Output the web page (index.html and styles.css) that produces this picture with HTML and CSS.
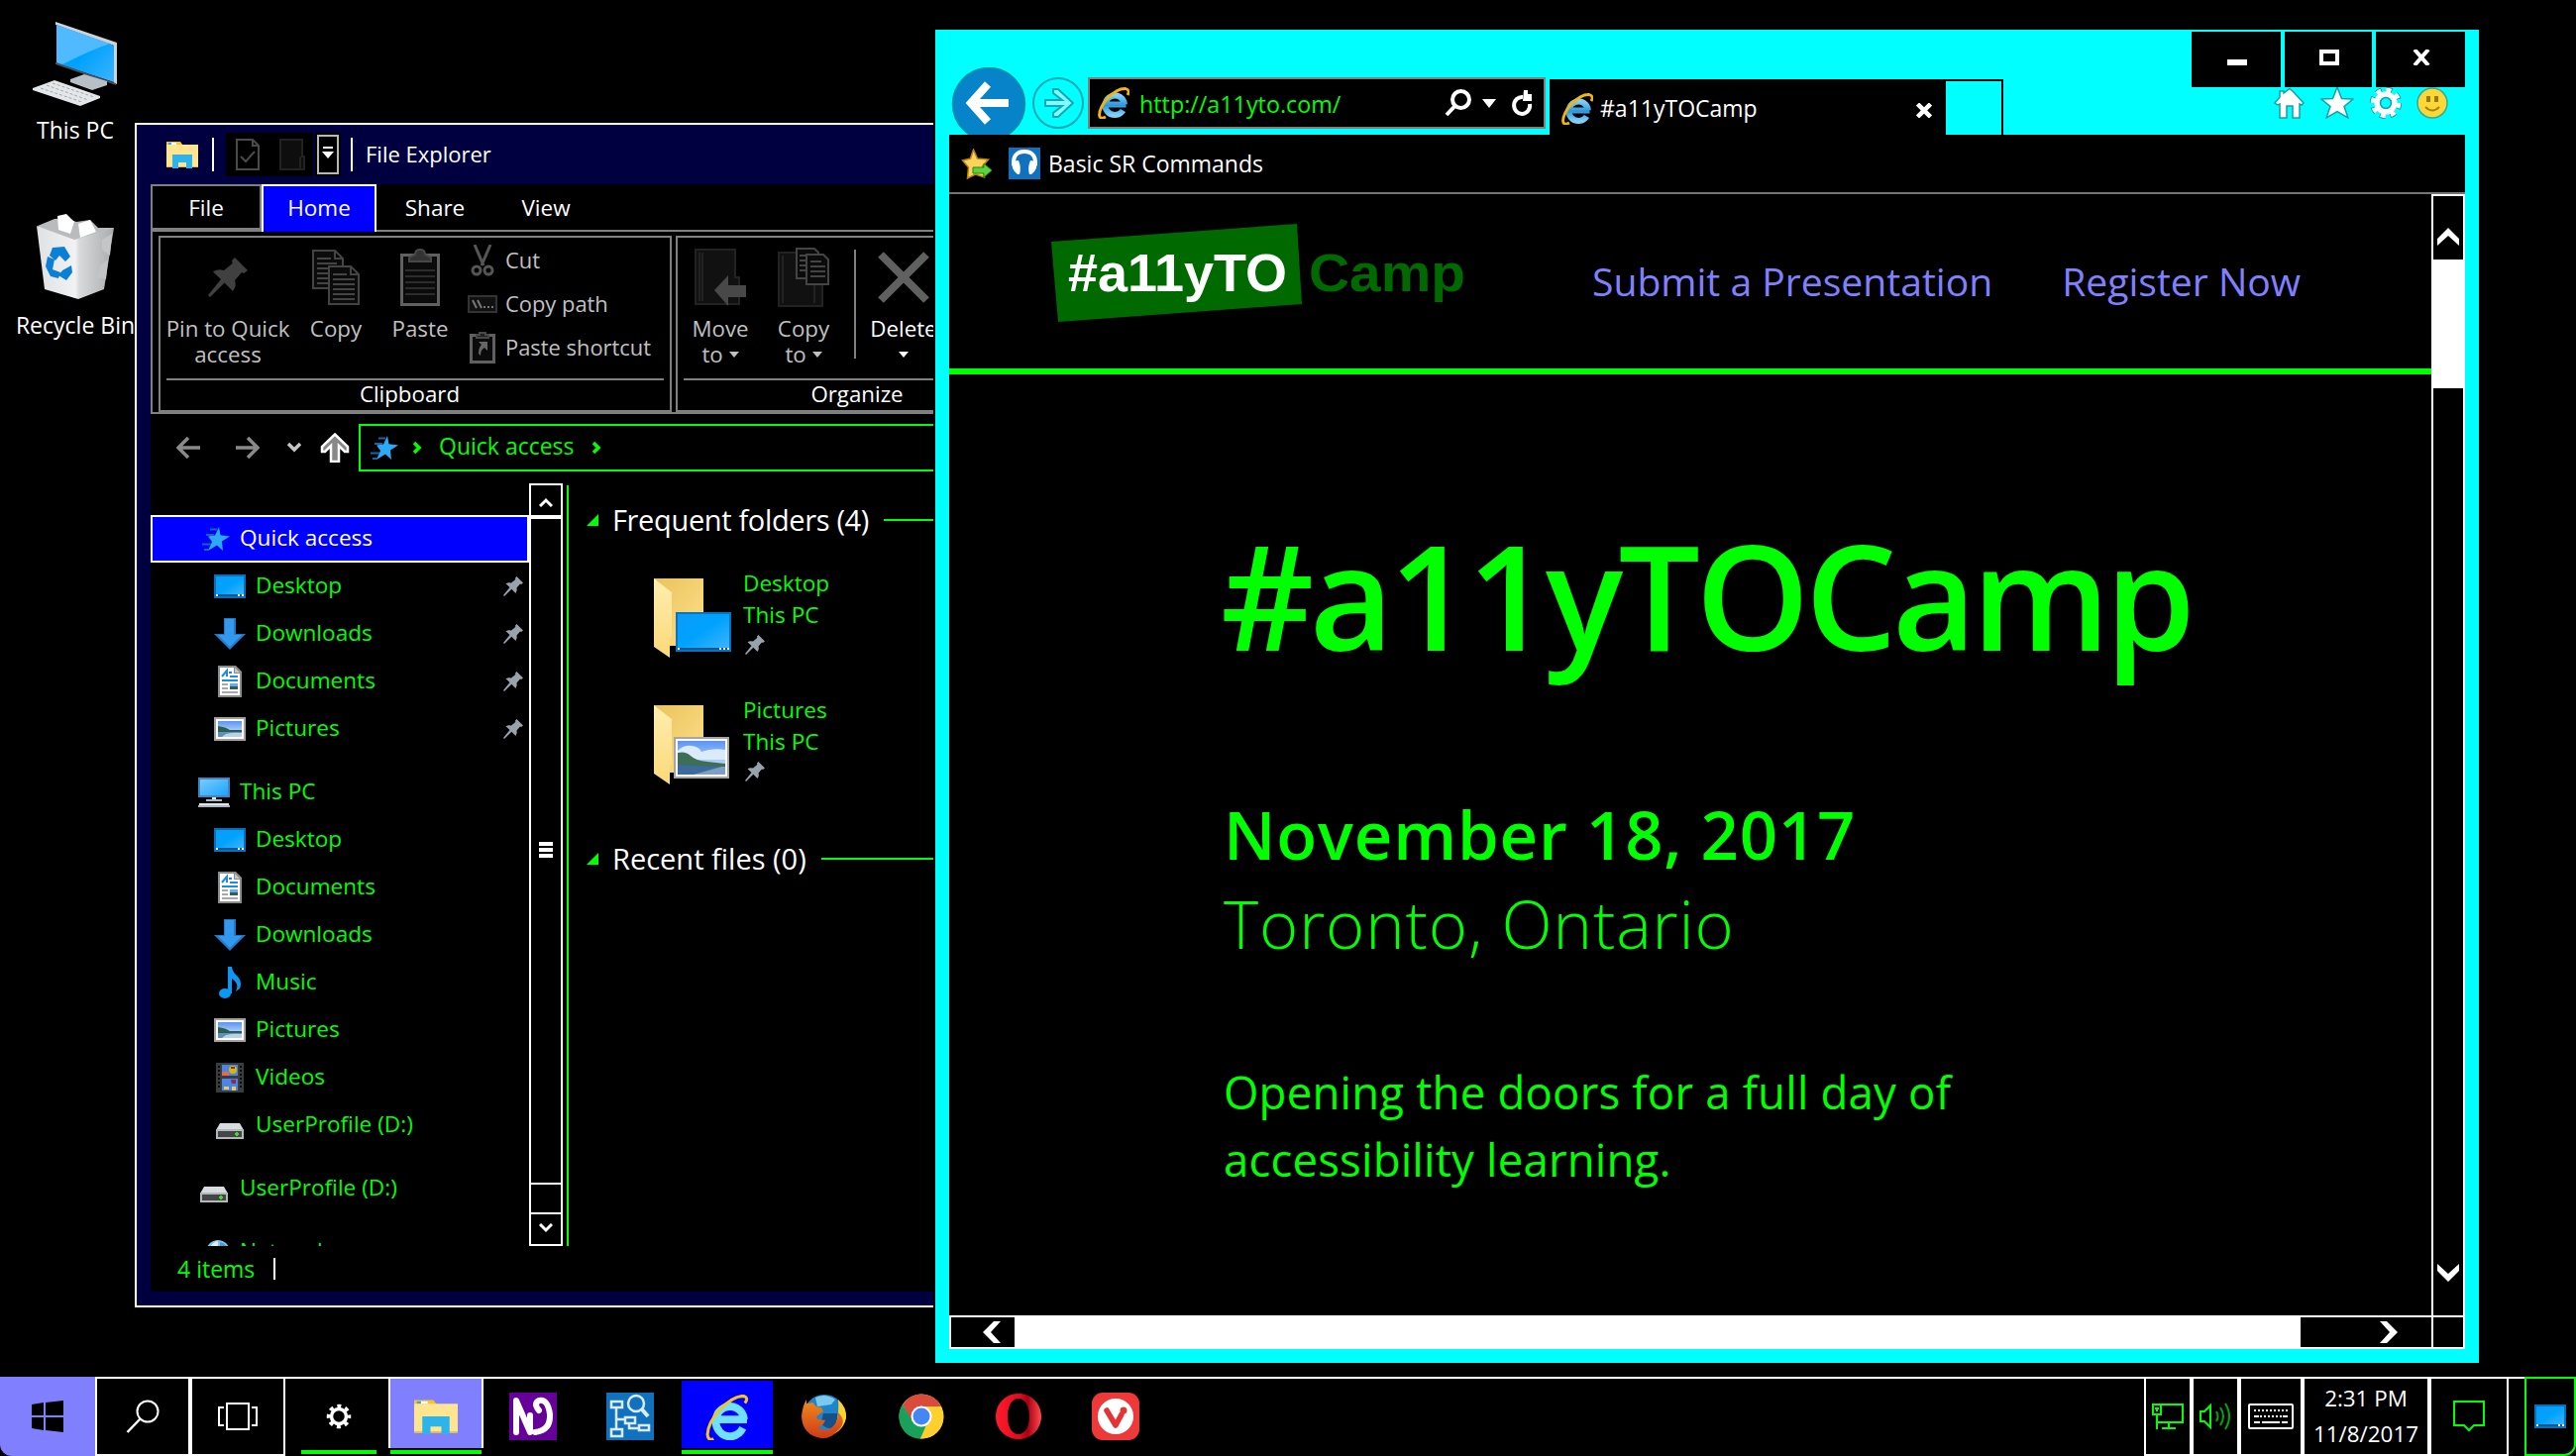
FILE: index.html
```html
<!DOCTYPE html>
<html lang="en">
<head>
<meta charset="utf-8">
<title>Desktop</title>
<link rel="stylesheet" href="styles.css">
</head>
<body>
<svg class="defs" width="0" height="0" aria-hidden="true">
  <defs>
    <linearGradient id="gSky" x1="0" y1="0" x2="0" y2="1"><stop offset="0" stop-color="#5a94f5"/><stop offset="1" stop-color="#e4f1fa"/></linearGradient>
    <linearGradient id="gBlue" x1="0" y1="0" x2="1" y2="1"><stop offset="0" stop-color="#0a9cf8"/><stop offset=".5" stop-color="#00a2ff"/><stop offset="1" stop-color="#3db3ff"/></linearGradient>
    <linearGradient id="gMon" x1="0" y1="0" x2="1" y2="1"><stop offset="0" stop-color="#7ccaff"/><stop offset="1" stop-color="#1aa5ff"/></linearGradient>
    <linearGradient id="gFold" x1="0" y1="0" x2="1" y2="1"><stop offset="0" stop-color="#e9c35c"/><stop offset="1" stop-color="#ffe08a"/></linearGradient>
    <linearGradient id="gFlap" x1="0" y1="0" x2="0" y2="1"><stop offset="0" stop-color="#ffeeb0"/><stop offset="1" stop-color="#fad978"/></linearGradient>
    <linearGradient id="gE" x1="0" y1="0" x2="0" y2="1"><stop offset="0" stop-color="#7ed0f8"/><stop offset=".5" stop-color="#2f96dc"/><stop offset="1" stop-color="#7ed0f8"/></linearGradient>
    <linearGradient id="gO" x1="0" y1="0" x2="1" y2="0"><stop offset="0" stop-color="#ff1b2d"/><stop offset=".55" stop-color="#e00a1c"/><stop offset=".7" stop-color="#a70014"/><stop offset="1" stop-color="#ff4b4b"/></linearGradient>
    <linearGradient id="gBin" x1="0" y1="0" x2="1" y2="0"><stop offset="0" stop-color="#dfe1e3"/><stop offset=".5" stop-color="#f2f2f3"/><stop offset=".55" stop-color="#d8dadb"/><stop offset="1" stop-color="#a9abad"/></linearGradient>
    <linearGradient id="gFox" x1="0" y1="0" x2="0" y2="1"><stop offset="0" stop-color="#f08a1d"/><stop offset="1" stop-color="#cf3a17"/></linearGradient>
  </defs>
  <symbol id="pin" viewBox="0 0 20 20"><path d="M13.5 0 20 6.5 18 8 17 7.5 13.5 11.5Q14.500 14.500 12.500 17L8.300 12.800 1 20 0 19 6.500 11 2.500 7.200Q5 5.500 8 6.500L12.300 3 12 1.500Z"/></symbol>
  <symbol id="star" viewBox="0 0 28 24"><path fill="#2da9f5" d="M17 0 18.500 8.200 28 9.500 20 14.500 21 24 15 18.500 6 24 10 15 6 9.500 13 8.500Z"/><path stroke="#1267a8" stroke-width="2" d="M8 2.500h7M4 8h8M0 17.500h9M2 23h5"/></symbol>
  <symbol id="screen" viewBox="0 0 32 24"><path fill="#0a6fb8" d="M0 0h32v24H0z"/><path fill="url(#gBlue)" d="M2 2h28v18H2z"/><path fill="#0a5a96" d="M2 20h28v2H2z"/><path fill="#fff" d="M2 20h2v2H2zM24 20h2v2h-2zM28 20h2v2h-2z"/></symbol>
  <symbol id="down" viewBox="0 0 32 32"><path fill="#1f78c8" d="M10 0h12v16h10L16 32 0 16h10z"/><path fill="#3399ee" d="M11 1h9v16h8L16 29 4 17h7z"/></symbol>
  <symbol id="doc" viewBox="0 0 24 32"><path fill="#8c8c8c" d="M0 0h18l6 6v26H0z"/><path fill="#fff" d="M2 2h14v6h6v22H2z"/><path fill="#c8c8c8" d="M17 2v5h5z"/><path stroke="#1a8ddc" stroke-width="2" fill="none" d="M4 11 9 5v6M11 7h3M12 11h8M4 15h16"/><path stroke="#a9a9a9" stroke-width="2" d="M4 19h6M4 23h6M4 27h16"/><path fill="#6fa8e8" d="M12 18h8v3h-8z"/><path fill="#2e5f55" d="M12 21h8v3h-8z"/></symbol>
  <symbol id="pic" viewBox="0 0 32 24"><path fill="#a0a0a0" d="M0 0h32v24H0z"/><path fill="#fff" d="M2 2h28v20H2z"/><path fill="url(#gSky)" d="M4 4h24v16H4z"/><path fill="#5d8fbf" d="M4 14h24v6H4z"/><path fill="#2f5f4a" d="M4 9q8 1 12 4h12v2H4z"/><path fill="#b9d2e6" d="M12 17q8-2 16-1v4H8z"/></symbol>
  <symbol id="pc" viewBox="0 0 32 30"><path fill="#3d88bf" d="M0 0h32v20H0z"/><path fill="url(#gMon)" d="M2 2h28v16H2z"/><path fill="#e5eaee" d="M14 20h4v2h-4z"/><path fill="#a9b8c6" d="M8 22h16v2H8zM0 28h32v2H0z"/><path fill="#e3e6e8" d="M1 26h30v2H1z"/></symbol>
  <symbol id="note" viewBox="0 0 22 32"><ellipse cx="6" cy="27" rx="6" ry="5" fill="#0b98f5"/><path fill="#0b98f5" d="M9 0h4q1 6 5 9 6 6 3 13l-4 3q4-8-4-13v15H9z"/></symbol>
  <symbol id="film" viewBox="0 0 28 30"><path fill="#3c3c3c" d="M0 0h28v30H0z"/><path fill="#4a86e8" d="M6 2h16v11H6zM6 16h16v12H6z"/><path fill="#0a0a0a" d="M2 3h2v2H2zM2 7h2v2H2zM2 11h2v2H2zM2 15h2v2H2zM2 19h2v2H2zM2 23h2v2H2zM24 3h2v2h-2zM24 7h2v2h-2zM24 11h2v2h-2zM24 15h2v2h-2zM24 19h2v2h-2zM24 23h2v2h-2z"/><circle cx="17" cy="7" r="4" fill="#d8b900"/><path fill="#e8674e" d="M6 9h7v4H6z"/><path fill="#8a2a5c" d="M15 4h4v2h-4zM15 17h5v4h-4z"/><path fill="#e2cf5a" d="M8 24h5v3H8zM16 24h4v4h-4z"/></symbol>
  <symbol id="drive" viewBox="0 0 28 16"><path fill="#d9dcdf" d="M4 0h20l4 7H0z"/><path fill="#b5b8bb" d="M0 6h28v10H0z"/><path fill="#454545" d="M2 8h24v6H2z"/><path fill="#2fe02f" d="M20 9h2v4h-2zM19 10h4v2h-4z"/></symbol>
  <symbol id="globe" viewBox="0 0 24 24"><circle cx="12" cy="12" r="12" fill="#7fc4e6"/><path fill="#d8f0fa" d="M4 8q2-6 8-7v5Q8 6 4 8z"/><path fill="#4a9fcf" d="M14 2q6 1 8 7h-8z"/></symbol>
  <symbol id="folder" viewBox="0 0 32 30"><path fill="#f7c32f" d="M0 2h14l3 4H0z"/><path fill="#fff" d="M5 3h5v2H5z"/><path fill="#2da9f5" d="M2 3h3v2H2z"/><path fill="#ffe58f" d="M0 5h32v23H0z"/><path fill="#e9b93c" d="M0 27h32v1H0z"/><path fill="#2db4ea" d="M6 29V15h20v14h-6v-6h-8v6z"/></symbol>
  <symbol id="bigfolder" viewBox="0 0 80 84"><path fill="url(#gFold)" d="M0 0h50v68H0z"/><path fill="url(#gFlap)" d="M0 0 18 14v46h-2v20L0 69z"/></symbol>
  <symbol id="bigpic" viewBox="0 0 56 42"><path fill="#a4a6a8" d="M0 0h56v42H0z"/><path fill="#fff" d="M2 2h52v38H2z"/><path fill="url(#gSky)" d="M4 4h48v34H4z"/><path fill="#dcebf9" d="M4 14q6-6 14-5t10 6q10-4 24-2v10H4z"/><path fill="#3c6a9e" d="M4 27h48v11H4z"/><path fill="#7f9fc2" d="M20 38l32-9v9z"/><path fill="#3d6e58" d="M4 16q8-2 13 3t17 6l18 2v3q-26 0-48-2z"/></symbol>
  <symbol id="ie" viewBox="0 0 32 32"><path fill="none" stroke="url(#gE)" stroke-width="6" d="M9 17.500H28.500M27 17.500A9.800 9.800 0 1 0 25.500 23.500"/><path fill="none" stroke="#f2b411" stroke-width="2.800" d="M8 30Q2 33 1.500 28 2 20 10 11 20 1 28 1.500 33 3 30 8"/></symbol>
</svg>

<div class="screen">
  <main class="desktop">
    <div class="shortcuts">
      <div class="shortcut">
        <svg class="shortcut-icon" viewBox="0 0 86 86"><path fill="#cfd3d6" d="M23 0 85 21v42l-3-1V24L23 3z"/><path fill="url(#gBlue)" d="M24 3 82 24v37L24 42z"/><path fill="#4fbaff" d="M24 3 78 22Q60 28 30 43l-6-2z"/><path fill="#4a4e52" d="M23 41 84 62v2L23 43z"/><path fill="#b8bfc5" d="M38 58 52 53 75 60v4L60 69 38 61z"/><path fill="#e4e7ea" d="M0 67 22 59 68 75v2L48 85 0 69z"/><path stroke="#a3a8ad" stroke-dasharray="3 2" d="M8 67 50 81M14 64 56 79M20 62l42 14"/></svg>
        <span>This PC</span>
      </div>
      <div class="shortcut bin">
        <svg class="shortcut-icon" viewBox="0 0 86 86"><path fill="#b9bbbd" d="M5 12 22 5 34 4l10 4 14-2 8 8 16 0-12 12-34 4-24-10z"/><path fill="#fff" d="M25 2 34 0 42 8 38 20 26 16zM46 10l12-4 6 12-16 6z"/><path fill="url(#gBin)" d="M4 12 42 26 82 14 72 76 46 86 12 76z"/><path fill="#c3c5c7" d="M70 26 80 20 78 42l-8-6zM68 52l8-6-2 20-8-2z"/><path fill="#0b7fd6" d="M20 34l12-1 6 10-5 5-6-6-4 5-6-5zM15 43l7 3-2 10 8 3-2 6-8-2-5-10zM30 57l9-5 1 7-6 8-8-5z"/></svg>
        <span>Recycle Bin</span>
      </div>
    </div>

    <section class="explorer">
      <header class="ex-title">
        <svg class="ex-folder" viewBox="0 0 32 30"><use href="#folder"/></svg>
        <i class="ex-sep"></i>
        <span class="qat">
          <svg width="24" height="32" viewBox="0 0 24 32" fill="none" stroke="#4a4a4a" stroke-width="2"><path d="M1 1h16l6 6v24H1zM17 1v6h6M5 18l5 5 9-10"/></svg>
          <svg width="26" height="32" viewBox="0 0 26 32" fill="#0e0e0e" stroke="#222" stroke-width="2"><path d="M1 1h22v17h2v13H1zM21 18v13"/></svg>
        </span>
        <span class="qat-more"><svg width="22" height="40" viewBox="0 0 22 40"><path fill="none" stroke="#b8b8b8" stroke-width="2" d="M1 1h20v38H1z"/><path fill="#fff" d="M6 12h10v2H6zM5 17h12l-6 7z"/></svg></span>
        <i class="ex-sep last"></i>
        <span class="ex-name">File Explorer</span>
      </header>
      <div class="ex-body">
        <nav class="ex-tabs">
          <span class="tab-file">File</span><span class="tab-home">Home</span>
          <span class="tab-rest"><span class="tab-share">Share</span><span class="tab-view">View</span></span>
        </nav>
        <div class="ribbon">
          <div class="group clip">
            <div class="group-body">
              <div class="tool t-pin"><span class="tool-icon"><svg width="40" height="40" viewBox="0 0 20 20" fill="#404040"><use href="#pin"/></svg></span><span>Pin to Quick<br>access</span></div>
              <div class="tool t-copy"><span class="tool-icon"><svg width="48" height="56" viewBox="0 0 48 56" fill="#0b0b0b" stroke="#444" stroke-width="2"><path d="M1 1h22l8 8v30H1zM23 1v8h8M5 9h14M5 14h20M5 19h20M5 24h20M5 29h20M5 34h20"/><path d="M17 17h22l8 8v30H17zM39 17v8h8M21 25h14M21 30h22M21 35h22M21 40h22M21 45h22M21 50h22"/></svg></span><span>Copy</span></div>
              <div class="tool t-paste"><span class="tool-icon"><svg width="40" height="58" viewBox="0 0 40 58" fill="#0b0b0b" stroke="#606060"><path stroke-width="3" d="M1.500 6.500h37v50h-37z"/><path stroke="#2c2c2c" stroke-width="2" d="M5 22h30M5 28h30M5 34h30M5 40h30M5 46h30"/><path fill="#333" stroke="#484848" stroke-width="2" d="M9 13V9l6-3q0-5 5-5t5 5l6 3v4z"/></svg></span><span>Paste</span></div>
              <div class="small-tools">
                <div><span class="st-icon"><svg width="24" height="32" viewBox="0 0 24 32" fill="none" stroke="#555" stroke-width="3"><path d="M4 0 13 21M20 0 11 21"/><circle cx="6" cy="26" r="4"/><circle cx="18" cy="26" r="4"/></svg></span>Cut</div>
                <div><span class="st-icon"><svg width="30" height="18" viewBox="0 0 30 18"><path fill="#111" stroke="#333" stroke-width="2" d="M1 1h28v16H1z"/><path stroke="#777" stroke-width="2" d="M5 5l4 8M10 5l4 8M16 12h2M20 12h2M24 12h2"/></svg></span>Copy path</div>
                <div><span class="st-icon"><svg width="26" height="32" viewBox="0 0 26 32"><path fill="#0b0b0b" stroke="#606060" stroke-width="3" d="M1.500 3.500h23v27h-23z"/><path fill="#222" stroke="#484848" stroke-width="2" d="M7 6V3h3V1h6v2h3v3z"/><path fill="#666" d="M9 10h9v9l-3-3q-4 2-4 8l-2-2q0-6 3-9z"/></svg></span>Paste shortcut</div>
              </div>
            </div>
            <div class="group-name">Clipboard</div>
          </div>
          <div class="group org">
            <div class="group-body">
              <div class="tool t-move"><span class="tool-icon"><svg width="52" height="58" viewBox="0 0 52 58"><path fill="#111" stroke="#222" stroke-width="2" d="M1 1h40v28h4v27H1zM5 4v49M8 4v49"/><path fill="#484848" d="M20 42 34 27v10h18v12H34v9z"/></svg></span><span>Move<br>to <i class="caret"></i></span></div>
              <div class="tool t-copyto"><span class="tool-icon"><svg width="52" height="60" viewBox="0 0 52 60"><path fill="#111" stroke="#222" stroke-width="2" d="M1 5h40v28h4v26H1zM5 8v48M37 38v18"/><path fill="#0b0b0b" stroke="#444" stroke-width="2" d="M19 1h18l4 4v26H19zM22 8h9M22 13h9M22 18h9M22 23h9"/><path fill="#0b0b0b" stroke="#444" stroke-width="2" d="M29 7h17l5 5v25H29zM33 14h11M33 19h15M33 24h15M33 29h15"/></svg></span><span>Copy<br>to <i class="caret"></i></span></div>
              <i class="tool-sep"></i>
              <div class="tool t-del"><span class="tool-icon"><svg width="52" height="52" viewBox="0 0 52 52" stroke="#606060" stroke-width="8"><path d="M3 3 49 49M49 3 3 49"/></svg></span><span>Delete<br><i class="caret"></i></span></div>
            </div>
            <div class="group-name">Organize</div>
          </div>
        </div>

        <div class="address-row">
          <svg class="nav-a" width="24" height="22" viewBox="0 0 24 22" fill="none" stroke="#8a8a8a" stroke-width="3.500"><path d="M24 11H3M12 1 2 11l10 10"/></svg>
          <svg class="nav-b" width="24" height="22" viewBox="0 0 24 22" fill="none" stroke="#8a8a8a" stroke-width="3.500"><path d="M0 11h21M12 1l10 10-10 10"/></svg>
          <svg class="nav-c" width="14" height="10" viewBox="0 0 14 10" fill="none" stroke="#c4c4c4" stroke-width="3.500"><path d="M1 1l6 6 6-6"/></svg>
          <svg class="nav-d" width="30" height="30" viewBox="0 0 30 30"><path fill="#888" stroke="#fff" stroke-width="2.500" d="M15 1.500 28 14v5h-3l-6-6v16h-8V13l-6 6H2v-5z"/></svg>
          <div class="address">
            <svg width="28" height="24" viewBox="0 0 28 24"><use href="#star"/></svg>
            <svg class="crumb1" width="10" height="12" viewBox="0 0 10 12" fill="none" stroke="#0f0" stroke-width="3.500"><path d="M2 1l5 5-5 5"/></svg>
            <span>Quick access</span>
            <svg width="10" height="12" viewBox="0 0 10 12" fill="none" stroke="#0f0" stroke-width="3.500"><path d="M2 1l5 5-5 5"/></svg>
          </div>
        </div>

        <div class="panes">
          <ul class="tree">
            <li class="root selected"><svg viewBox="0 0 28 24" width="28" height="24"><use href="#star"/></svg>Quick access</li>
            <li><svg viewBox="0 0 32 24" width="32" height="24"><use href="#screen"/></svg>Desktop<svg class="pinned" viewBox="0 0 20 20"><use href="#pin"/></svg></li>
            <li><svg viewBox="0 0 32 32" width="32" height="32"><use href="#down"/></svg>Downloads<svg class="pinned" viewBox="0 0 20 20"><use href="#pin"/></svg></li>
            <li><svg viewBox="0 0 24 32" width="32" height="32"><use href="#doc"/></svg>Documents<svg class="pinned" viewBox="0 0 20 20"><use href="#pin"/></svg></li>
            <li><svg viewBox="0 0 32 24" width="32" height="24"><use href="#pic"/></svg>Pictures<svg class="pinned" viewBox="0 0 20 20"><use href="#pin"/></svg></li>
            <li class="root gap"><svg viewBox="0 0 32 30" width="32" height="30"><use href="#pc"/></svg>This PC</li>
            <li><svg viewBox="0 0 32 24" width="32" height="24"><use href="#screen"/></svg>Desktop</li>
            <li><svg viewBox="0 0 24 32" width="32" height="32"><use href="#doc"/></svg>Documents</li>
            <li><svg viewBox="0 0 32 32" width="32" height="32"><use href="#down"/></svg>Downloads</li>
            <li><svg viewBox="0 0 22 32" width="32" height="32"><use href="#note"/></svg>Music</li>
            <li><svg viewBox="0 0 32 24" width="32" height="24"><use href="#pic"/></svg>Pictures</li>
            <li><svg viewBox="0 0 28 30" width="32" height="30"><use href="#film"/></svg>Videos</li>
            <li><svg class="low" viewBox="0 0 28 16" width="32" height="16"><use href="#drive"/></svg>UserProfile (D:)</li>
            <li class="root gap"><svg class="low" viewBox="0 0 28 16" width="32" height="16"><use href="#drive"/></svg>UserProfile (D:)</li>
            <li class="root gap"><svg class="network" viewBox="0 0 24 24" width="32" height="24"><use href="#globe"/></svg>Network</li>
          </ul>
          <div class="ex-scroll">
            <span class="sb-btn"><svg width="14" height="10" viewBox="0 0 14 10" fill="none" stroke="#fff" stroke-width="3"><path d="M1 9l6-6 6 6"/></svg></span>
            <span class="sb-thumb"><i></i><i></i><i></i></span>
            <span class="sb-track"></span>
            <span class="sb-btn bottom"><svg width="14" height="10" viewBox="0 0 14 10" fill="none" stroke="#fff" stroke-width="3"><path d="M1 1l6 6 6-6"/></svg></span>
          </div>
          <div class="files">
            <h2><svg width="12" height="12" viewBox="0 0 12 12"><path fill="#0f0" d="M12 0v12H0z"/></svg><span class="h-a">Frequent folders (4)</span></h2>
            <div class="frequent">
              <div class="entry">
                <div class="thumb"><svg width="80" height="84"><use href="#bigfolder"/></svg><svg class="over desk" width="56" height="40" viewBox="0 0 56 40"><path fill="#0a73bf" d="M0 0h56v40H0z"/><path fill="url(#gBlue)" d="M2 2h52v34H2z"/><path fill="#0a5a96" d="M2 36h52v2H2z"/><path fill="#fff" d="M2 36h2v2H2zM44 36h2v2h-2zM48 36h2v2h-2zM52 36h2v2h-2z"/></svg></div>
                <div class="entry-text">Desktop<br>This PC<svg class="pinned" viewBox="0 0 20 20"><use href="#pin"/></svg></div>
              </div>
              <div class="entry">
                <div class="thumb"><svg width="80" height="84"><use href="#bigfolder"/></svg><svg class="over" width="56" height="42"><use href="#bigpic"/></svg></div>
                <div class="entry-text">Pictures<br>This PC<svg class="pinned" viewBox="0 0 20 20"><use href="#pin"/></svg></div>
              </div>
            </div>
            <h2><svg width="12" height="12" viewBox="0 0 12 12"><path fill="#0f0" d="M12 0v12H0z"/></svg><span class="h-b">Recent files (0)</span></h2>
          </div>
        </div>
        <footer class="ex-status">4 items<i></i></footer>
      </div>
    </section>

    <section class="browser">
      <header class="br-top">
        <svg class="back" width="76" height="68" viewBox="0 0 76 68"><circle cx="38" cy="37" r="36.500" fill="#0683c9" stroke="#0f93a5" stroke-width="1.500"/><path fill="none" stroke="#fff" stroke-width="8" d="M58 36H22M37 17 20 36l17 19"/></svg>
        <svg class="fwd" width="52" height="52" viewBox="0 0 52 52"><circle cx="26" cy="26" r="25" fill="none" stroke="#10a9b4" stroke-width="2"/><path fill="#7ffbff" stroke="#12a7b5" stroke-width="2" d="M13 23h17l-9-7v-4h5l15 14-15 14h-5v-4l9-7H13z"/></svg>
        <div class="url">
          <svg width="32" height="32"><use href="#ie"/></svg>
          <span>http://a11yto.com/</span>
          <svg class="find" width="28" height="28" viewBox="0 0 28 28" fill="none" stroke="#fff" stroke-width="4"><circle cx="16.500" cy="10.500" r="8.500"/><path d="M10.500 17 2 26"/></svg>
          <svg class="drop" width="14" height="9" viewBox="0 0 14 9"><path fill="#fff" d="M0 0h14L7 9z"/></svg>
          <svg class="reload" width="22" height="28" viewBox="0 0 22 28"><path fill="none" stroke="#fff" stroke-width="4" d="M12 8A8 8.500 0 1 0 19 15"/><path fill="#fff" d="M13 1h4v4h4v7h-9z"/></svg>
        </div>
        <div class="br-tab"><svg width="32" height="32"><use href="#ie"/></svg><span>#a11yTOCamp</span><svg class="x" width="16" height="15" viewBox="0 0 16 15" stroke="#fff" stroke-width="4.500"><path d="M1.500 1l13 13M14.500 1l-13 13"/></svg></div>
        <div class="br-newtab"></div>
        <div class="br-right">
          <div class="win-buttons">
            <span><svg width="20" height="16" viewBox="0 0 20 16"><path fill="#fff" d="M0 10h20v6H0z"/></svg></span>
            <span><svg width="20" height="16" viewBox="0 0 20 16"><path fill="none" stroke="#fff" stroke-width="4" d="M2 2h16v12H2z"/></svg></span>
            <span><svg width="18" height="16" viewBox="0 0 18 16" stroke="#fff" stroke-width="4"><path d="M2 0l14 16M16 0 2 16"/></svg></span>
          </div>
          <div class="br-tools">
            <svg width="34" height="32" viewBox="0 0 34 32"><path fill="#fff" stroke="#15a0a5" stroke-width="1.500" d="M17 1.500 21 5l10 11-2 2-2-1v14h-7V19h-6v12H7V17l-2 1-3-2 5-6V4h4v2z"/></svg>
            <svg width="34" height="32" viewBox="0 0 34 32"><path fill="#fff" stroke="#15a0a5" stroke-width="1.500" d="M17 0l4.500 11.500L33 12l-9 7.500L28 31l-11-6.500L6 31l4-11.500L1 12l11.500-.5z"/></svg>
            <svg width="34" height="32" viewBox="0 0 34 32"><circle cx="18" cy="16" r="13.500" fill="none" stroke="#15a0a5" stroke-width="5.500" stroke-dasharray="6 4.600"/><circle cx="18" cy="16" r="13" fill="none" stroke="#fff" stroke-width="4.500" stroke-dasharray="5 5.210"/><circle cx="18" cy="16" r="8.500" fill="none" stroke="#fff" stroke-width="6"/><circle cx="18" cy="16" r="5.500" fill="none" stroke="#15a0a5" stroke-width="1.500"/></svg>
            <svg width="34" height="32" viewBox="0 0 34 32"><circle cx="17" cy="16" r="15" fill="#fdd835" stroke="#38a89a" stroke-width="1.500"/><path fill="#94781c" d="M11 9h4v6h-4zM19 9h4v6h-4z"/><path fill="none" stroke="#a5861e" stroke-width="2" d="M10 20q7 7 14 0"/></svg>
          </div>
        </div>
      </header>
      <div class="favorites">
        <svg width="32" height="32" viewBox="0 0 32 32"><path fill="#fbd25a" stroke="#b9800f" stroke-width="1.500" d="M12.500 1l4 9 11 1-6 7 2 11-9-3-8 4 1-11-6-7 8-2z"/><path fill="#5fd23b" stroke="#1f8a12" d="M12 19h11v-4l8 7-8 7v-4H12z"/></svg>
        <svg class="headset" width="32" height="32" viewBox="0 0 32 32"><path fill="#1072bf" d="M0 0h32v32H0z"/><path fill="none" stroke="#fff" stroke-width="4" d="M5 18Q4 4 16 4t11 14"/><path fill="#fff" d="M4 14l6-1q3 7 1 14H9Q2 22 4 14zM28 14l-6-1q-3 7-1 14h2q7-5 5-13z"/></svg>
        <span>Basic SR Commands</span>
      </div>
      <div class="viewport">
        <article class="page">
          <header class="site-head">
            <svg class="logo" width="430" height="104" viewBox="0 0 430 104"><path fill="#006a00" d="M1 19 249 1 254 82 8 100z"/><text x="18" y="69" fill="#fff" textLength="221" lengthAdjust="spacingAndGlyphs">#a11yTO</text><text x="261" y="69" fill="#006a00" textLength="158" lengthAdjust="spacingAndGlyphs">Camp</text></svg>
            <a class="l1">Submit a Presentation</a><a>Register Now</a>
          </header>
          <div class="hero">
            <h1>#a11yTOCamp</h1>
            <p class="when"><b>November 18, 2017</b><br>Toronto, Ontario</p>
            <p class="lead">Opening the doors for a full day of<br>accessibility learning.</p>
          </div>
        </article>
        <div class="vbar">
          <svg width="22" height="18" viewBox="0 0 22 18" fill="#fff"><path d="M0 18V11L11 0l11 11v7L11 8z"/></svg>
          <i></i>
          <svg class="dn" width="22" height="18" viewBox="0 0 22 18" fill="#fff"><path d="M0 0v7l11 11L22 7V0L11 10z"/></svg>
        </div>
        <div class="hbar">
          <svg width="18" height="22" viewBox="0 0 18 22" fill="#fff"><path d="M18 0h-7L0 11l11 11h7L8 11z"/></svg>
          <i></i>
          <svg class="rt" width="18" height="22" viewBox="0 0 18 22" fill="#fff"><path d="M0 0h7l11 11L7 22H0l10-11z"/></svg>
        </div>
        <div class="corner"></div>
      </div>
    </section>
  </main>

  <footer class="taskbar">
    <span class="start"><svg width="32" height="32" viewBox="0 0 32 32"><path d="M0 4 12 2v13H0zM14 2 32 0v15H14zM0 17h12v13L0 28zM14 17h18v15L14 30z"/></svg></span>
    <span class="tb-box"><svg width="34" height="34" viewBox="0 0 34 34" fill="none" stroke="#fff" stroke-width="2"><circle cx="22" cy="12" r="10.500"/><path stroke-width="2.500" d="M14.500 19.500 1.500 33"/></svg></span>
    <span class="tb-box"><svg width="40" height="28" viewBox="0 0 40 28" fill="none" stroke="#fff" stroke-width="2"><path d="M9 1h22v26H9zM6 5H1v18h5M34 5h5v18h-5"/></svg></span>
    <span class="tb-app gear"><svg width="26" height="26" viewBox="0 0 26 26" fill="none" stroke="#fff"><circle cx="13" cy="13" r="7.500" stroke-width="3.500"/><circle cx="13" cy="13" r="10.500" stroke-width="3.500" stroke-dasharray="4 4.250" stroke-dashoffset="2"/></svg></span>
    <span class="tb-app exp"><svg width="44" height="38" viewBox="0 0 32 30" preserveAspectRatio="none"><use href="#folder"/></svg></span>
    <span class="tb-app nvda"><svg width="48" height="48" viewBox="0 0 48 48"><path fill="#650099" d="M0 0h48v48H0z"/><path fill="none" stroke="#fff" stroke-width="6" stroke-linecap="round" stroke-linejoin="round" d="M7 40V8L21 40V23M26 40Q42 38 41 22 39 6 30 8 24 11 30 18"/></svg></span>
    <span class="tb-app"><svg width="48" height="48" viewBox="0 0 48 48"><path fill="#1072bf" d="M0 0h48v48H0z"/><g fill="none" stroke="#dceaf6" stroke-width="2.500"><circle cx="30" cy="11" r="8"/><path stroke-width="4" d="M36 17l6 7"/><path d="M5 9h11v6H5zM5 37h11v7H5zM19 25h10v6H19zM33 33h10v5H33zM10 15v22M10 27h9M23 31v5h10"/></g></svg></span>
    <span class="tb-app ie"><svg width="44" height="46" viewBox="0 0 32 32" preserveAspectRatio="none"><path fill="none" stroke="#6fe0ff" stroke-width="5.500" d="M9 17.500H30.500M28.500 17.500A10.500 10.500 0 1 0 27.500 23.500"/><path fill="none" stroke="#f6c41c" stroke-width="2.200" d="M6 31Q2 33 1.500 28 2 20 10 11 20 1 28 1 32 2 29 6"/></svg></span>
    <span class="tb-app"><svg width="46" height="46" viewBox="0 0 46 46"><circle cx="23" cy="22" r="21" fill="#1d86c8"/><path fill="#155089" d="M22 20h14q3 10-6 15-8 0-10-6z"/><path fill="#7cc9ee" d="M14 4q10-5 20 2l-4 5-14 2z"/><path fill="#f8d22e" d="M37 6q9 8 8 19-4 15-18 17 12-10 10-36z"/><path fill="url(#gFox)" d="M5 6v4l7-1q1 5 8 5l2 4-7 5 1 3 8 1q-3 7-8 7 8 6 16-1 5-5 5-14 10 10-1 19-7 8-16 7Q1 42 0 23 1 12 5 6z"/></svg></span>
    <span class="tb-app"><svg width="46" height="46" viewBox="0 0 46 46"><circle cx="23" cy="23" r="22.500" fill="#fdd02f"/><path fill="#d94c3d" d="M4 11Q12 0 23 .5 37 1 43 13H23L13 28z"/><path fill="#18a15b" d="M4 11 14 28 29 29 22 45.500Q8 45 2 32-2 20 4 11z"/><path fill="#fdd02f" d="M23 13h20q6 16-4 26-7 7-17 6.500L32 28z"/><circle cx="23" cy="23" r="10.500" fill="#fff"/><circle cx="23" cy="23" r="8.500" fill="#4486f4"/></svg></span>
    <span class="tb-app"><svg width="46" height="46" viewBox="0 0 46 46"><path fill="url(#gO)" fill-rule="evenodd" d="M23 0C36 0 46 10 46 23S36 46 23 46 0 36 0 23 10 0 23 0zm0 5c-7 0-11 8-11 18s4 18 11 18 11-8 11-18S30 5 23 5z"/></svg></span>
    <span class="tb-app"><svg width="48" height="48" viewBox="0 0 48 48"><rect width="48" height="48" rx="11" fill="#ef3939"/><circle cx="24" cy="24" r="18" fill="#fff"/><path fill="none" stroke="#e63232" stroke-width="5.500" stroke-linecap="round" stroke-linejoin="round" d="M15 18 24 33 30 22"/><circle cx="32" cy="18" r="3.500" fill="#e63232"/></svg></span>

    <span class="tray">
      <span class="tb-box net"><svg width="32" height="26" viewBox="0 0 32 26" fill="none" stroke="#0f0" stroke-width="2"><path d="M10 1h21v18H6M1 1h8v10H1zM3 5h4M5 5v3M5 11v15M17 19v5M10 25h14"/></svg></span>
      <span class="tb-box vol"><svg width="32" height="28" viewBox="0 0 32 28" fill="none" stroke="#0f0" stroke-width="2"><path d="M1 9h4l6-6v22l-6-6H1z"/><path stroke="#00a800" d="M17 9q3 5 0 10M21 5q6 9 0 18M26 1q8 13 0 26"/></svg></span>
      <span class="tb-box kbd"><svg width="46" height="26" viewBox="0 0 46 26" fill="none" stroke="#fff" stroke-width="2"><rect x="1" y="1" width="44" height="24" rx="1"/><path stroke-dasharray="2 2" d="M6 7h34M12 13h24"/><path d="M6 13h5M35 13h5M6 19h6M14 19h18M34 19h6"/></svg></span>
      <span class="tb-box clock">2:31 PM<br>11/8/2017</span>
      <span class="tb-box act"><svg width="32" height="32" viewBox="0 0 32 32" fill="none" stroke="#0f0" stroke-width="2"><path d="M1 1h30v24H21l-5 5-5-5H1z"/></svg></span>
      <span class="tb-box peek"><svg width="32" height="24"><use href="#screen"/></svg></span>
    </span>
  </footer>
</div>
</body>
</html>
```
FILE: styles.css
```css
* { box-sizing: border-box; }
html, body { margin: 0; background: #000; }
body { font-family: "Open Sans", "Noto Sans", sans-serif; font-size: 23px; color: #fff; overflow: hidden; }
svg { display: block; flex: none; }
h1, h2, p, ul { margin: 0; padding: 0; font-weight: 400; }
.defs { position: absolute; }

.screen { width: 2600px; height: 1470px; display: flex; flex-direction: column; overflow: hidden; }
.desktop { position: relative; height: 1390px; flex: none; }

/* desktop shortcuts */
.shortcuts { width: 152px; padding-top: 22px; display: flex; flex-direction: column; gap: 68px; }
.shortcut { display: flex; flex-direction: column; align-items: center; gap: 8px; line-height: 30px; white-space: nowrap; height: 126px; }
.bin { gap: 11px; }
.shortcut-icon { width: 86px; height: 86px; }

/* file explorer window */
.explorer { position: absolute; left: 136px; top: 124px; width: 806px; height: 1196px; background: #000040; border: 2px solid #fff; border-right: 0; overflow: hidden; display: flex; flex-direction: column; padding: 0 0 14px 14px; }
.ex-title { height: 60px; flex: none; display: flex; align-items: center; padding-left: 16px; }
.ex-folder { width: 32px; height: 30px; }
.ex-sep { width: 2px; height: 34px; background: #fff; margin: 0 12px 0 14px; }
.ex-sep.last { margin: 0 13px 0 10px; }
.qat { display: flex; gap: 20px; background: #000; width: 88px; height: 44px; align-items: center; padding-left: 10px; }
.qat-more { display: flex; align-items: center; justify-content: center; background: #000; width: 26px; height: 44px; margin-left: 2px; }
.ex-name { font-size: 22px; line-height: 30px; margin-bottom: 2px; }
.ex-body { background: #000; flex: 1; display: flex; flex-direction: column; min-height: 0; }

.ex-tabs { display: flex; height: 48px; flex: none; line-height: 43px; font-size: 22.5px; text-align: center; }
.tab-file { width: 112px; border: 2px solid #808080; border-bottom-width: 4px; }
.tab-home { width: 116px; background: #00f; border: 2px solid #fff; border-bottom: 0; }
.tab-rest { flex: 1; display: flex; border-bottom: 2px solid #808080; padding-top: 2px; }
.tab-share { width: 118px; }
.tab-view { width: 106px; }

.ribbon { height: 184px; flex: none; border-left: 2px solid #808080; border-bottom: 2px solid #808080; padding: 4px 0 0 6px; display: flex; gap: 4px; font-size: 22.3px; }
.group { border: 2px solid #808080; flex: none; display: flex; flex-direction: column; }
.clip { width: 518px; }
.clip .group-name { padding-right: 11px; }
.org { width: 366px; }
.group-body { height: 142px; display: flex; }
.tool { text-align: center; line-height: 26px; color: #c0c0c0; white-space: nowrap; }
.tool-icon { height: 79px; display: flex; align-items: center; justify-content: center; }
.t-pin { width: 136px; }
.t-copy { width: 82px; }
.t-paste { width: 88px; }
.t-move { width: 86px; }
.t-copyto { width: 82px; }
.t-del { width: 96px; color: #fff; }
.caret { display: inline-block; vertical-align: 5px; border: 5px solid transparent; border-top: 6px solid currentColor; border-bottom: 0; }
.tool-sep { width: 2px; height: 110px; background: #808080; margin: 12px 0 0 10px; }
.small-tools { padding: 1px 0 0 4px; color: #c0c0c0; font-size: 21.9px; line-height: 44px; }
.small-tools > div { display: flex; align-items: center; height: 44px; white-space: nowrap; }
.st-icon { width: 30px; margin-right: 8px; display: flex; justify-content: center; }
.group-name { margin: 0 6px; border-top: 2px solid #808080; text-align: center; line-height: 28px; }

.address-row { height: 70px; flex: none; display: flex; align-items: center; padding: 0 0 2px 26px; }
.nav-b { margin-left: 36px; }
.nav-c { margin-left: 28px; }
.nav-d { margin-left: 19px; }
.address { flex: 1; height: 48px; border: 2px solid #0f0; border-right: 0; margin-left: 9px; padding-left: 10px; display: flex; align-items: center; color: #0f0; line-height: 40px; }
.address span { padding: 0 17px 4px 17px; }
.crumb1 { margin-left: 14px; }

.panes { height: 770px; flex: none; display: flex; overflow: hidden; }
.tree { width: 382px; flex: none; list-style: none; padding-top: 32px; color: #0f0; font-size: 22.6px; }
.tree li { height: 48px; display: flex; align-items: center; gap: 10px; padding: 0 6px 3px 64px; white-space: nowrap; }
.tree li > svg { position: relative; top: 1px; }
.tree li.root { padding-left: 48px; }
.tree li.gap { margin-top: 16px; }
.tree li.selected { background: #00f; color: #fff; border: 2px solid #fff; padding-left: 50px; }
.tree .low { margin-top: 12px; }
.tree .network { margin: 0 -4px 0 4px; }
.pinned { width: 20px; height: 20px; fill: #98a2ab; }
.tree .pinned { margin-left: auto; }

.ex-scroll { width: 34px; flex: none; display: flex; flex-direction: column; margin-right: 4px; }
.ex-scroll > span { border: 2px solid #fff; display: flex; align-items: center; justify-content: center; }
.sb-btn { height: 34px; padding-top: 4px; }
.sb-btn.bottom { padding: 0 0 2px; }
.sb-thumb { height: 674px; flex-direction: column; gap: 2px; padding-bottom: 2px; }
.sb-thumb i { width: 14px; height: 4px; background: #fff; }
.ex-scroll > .sb-track { height: 28px; border-width: 0 2px; }

.files { flex: 1; border-left: 2px solid #0f0; margin-top: 2px; padding: 14px 0 0 18px; }
.files h2 { font-size: 29px; letter-spacing: -.35px; line-height: 42px; height: 44px; display: flex; align-items: center; white-space: nowrap; }
.files h2 svg { margin: -2px 14px 0 0; }
.files h2 span { padding-bottom: 2px; }
.h-b { letter-spacing: 0; }
.files h2::after { content: ""; height: 2px; background: #0f0; flex: 1; margin: -2px 0 0 15px; }
.frequent { padding: 36px 0 0 68px; height: 298px; display: flex; flex-direction: column; gap: 44px; }
.entry { display: flex; height: 84px; }
.thumb { position: relative; width: 80px; }
.over { position: absolute; left: 20px; top: 32px; }
.over.desk { left: 22px; top: 34px; }
.entry-text { color: #0f0; line-height: 32px; margin: -11px 0 0 10px; font-size: 22.6px; }
.entry-text .pinned { margin: 4px 0 0 2px; }
.ex-status { height: 46px; color: #0f0; display: flex; align-items: center; padding: 0 0 0 27px; line-height: 46px; }
.ex-status i { width: 2px; height: 22px; background: #fff; margin-left: 19px; }

/* browser window */
.browser { position: absolute; left: 944px; top: 30px; width: 1558px; height: 1346px; background: #0ff; padding: 0 14px 14px; display: flex; flex-direction: column; box-shadow: 0 0 0 2px #000; }
.br-top { height: 106px; flex: none; display: flex; align-items: flex-end; }
.back { margin-left: 2px; }
.fwd { margin: 0 0 6px 6px; }
.url { width: 462px; height: 52px; margin: 0 0 6px 4px; background: #000; border: 2px solid #808080; display: flex; align-items: center; padding-left: 8px; color: #0f0; }
.url span { font-size: 23.300px; line-height: 40px; margin: 1px 0 0 10px; width: 308px; }
.drop { margin-left: 10px; }
.reload { margin-left: 15px; }
.br-tab { width: 400px; height: 56px; margin-left: 4px; background: #000; display: flex; align-items: center; padding: 4px 14px 0 12px; }
.br-tab span { flex: 1; margin: 0 0 2px 7px; line-height: 36px; }
.br-tab .x { margin-top: 2px; }
.br-newtab { width: 58px; height: 56px; border: solid #000; border-width: 2px 2px 0 0; }
.br-right { width: 276px; height: 106px; margin-left: auto; padding-top: 2px; }
.win-buttons { display: grid; grid-template-columns: 90px 88px 90px; gap: 4px; height: 56px; }
.win-buttons span { background: #000; display: flex; align-items: center; justify-content: center; padding: 0 0 4px 2px; }
.br-tools { display: flex; gap: 14px; padding-left: 82px; }
.favorites { height: 60px; flex: none; background: #000; border-bottom: 2px solid #757575; display: flex; align-items: center; padding: 2px 0 0 12px; }
.favorites span { margin: 0 0 2px 8px; }
.headset { margin: 0 0 2px 16px; }

.viewport { flex: 1; min-height: 0; background: #000; display: grid; grid-template-columns: 1fr 34px; grid-template-rows: 1132px 34px; }
.page { overflow: hidden; }
.site-head { height: 182px; border-bottom: 6px solid #0f0; display: flex; align-items: flex-start; padding-left: 102px; color: #8080ff; font-size: 39.100px; line-height: 50px; }
.logo { margin-top: 29px; font: bold 54px "Liberation Sans", Arial, sans-serif; }
.site-head a { margin: 63px 0 0 70px; white-space: nowrap; }
.site-head a.l1 { margin-left: 117px; }
.hero { padding: 150px 0 0 277px; color: #0f0; }
.hero h1 { font-size: 146px; font-weight: 600; line-height: 146px; letter-spacing: -4.5px; margin-left: -3px; }
.when { margin-top: 123px; font-size: 67px; font-weight: 300; line-height: 90px; letter-spacing: .85px; }
.when b { font-weight: 600; }
.lead { margin-top: 91px; font-size: 45.600px; line-height: 68px; letter-spacing: .15px; }

.vbar { border: 2px solid #fff; border-bottom: 0; display: flex; flex-direction: column; align-items: center; padding-top: 32px; }
.vbar i { width: 30px; height: 130px; background: #fff; margin-top: 14px; }
.vbar .dn { margin: auto 0 34px; }
.hbar { border: 2px solid #fff; border-right: 0; display: flex; align-items: center; padding: 0 34px 0 32px; }
.hbar i { height: 30px; width: 1298px; background: #fff; margin-left: 14px; }
.hbar .rt { margin-left: auto; }
.corner { border: 2px solid #fff; }

/* taskbar */
.taskbar { height: 80px; flex: none; border-top: 2px solid #fff; display: flex; }
.taskbar > span, .tray > span { display: flex; align-items: center; justify-content: center; flex: none; }
.start { width: 96px; margin-top: -2px; background: #8080ff; border-bottom-left-radius: 12px; }
.tb-box { width: 96px; border: 2px solid #fff; border-top: 0; }
.tb-app { width: 92px; height: 70px; margin-right: 6px; position: relative; padding-top: 6px; }
.tb-app.gear { width: 76px; margin: 0 12px 0 16px; }
.tb-app.exp { width: 96px; background: #8080ff; border: 2px solid #fff; border-width: 0 2px; }
.tb-app.nvda { width: 90px; padding-right: 2px; }
.tb-app.ie { background: #00f; border-top: 2px solid #000; }
.gear::after, .exp::after, .ie::after { content: ""; position: absolute; left: 0; right: 0; top: 72px; height: 4px; background: #0f0; }
.ie::after { top: 70px; }
.taskbar > .tray { margin-left: auto; align-items: stretch; }
.net, .vol { width: 48px; }
.kbd { width: 64px; }
.tb-box.clock { width: 128px; font-size: 22.400px; line-height: 36px; text-align: center; }
.act { width: 80px; }
.tb-box.peek { width: 52px; margin: -2px 0 0 16px; border: 2px solid #0f0; border-bottom-right-radius: 12px; }
```
